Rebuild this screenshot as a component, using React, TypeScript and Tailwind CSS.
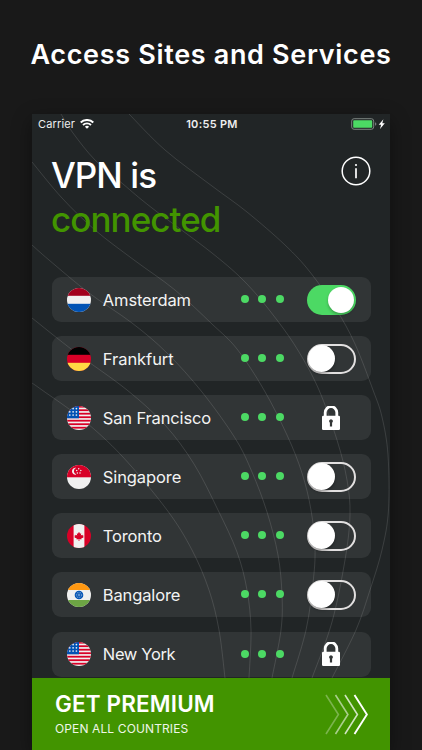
import type { ReactNode } from 'react';

type Point = [number, number];

interface Location {
  name: string;
  flag: keyof typeof flags;
  status: 'on' | 'off' | 'locked';
  tracking: string;
}

const stripes = [0, 1, 2, 3, 4, 5, 6];

const flags = {
  nl: (
    <>
      <rect width="24" height="24" fill="#f0f0f0" />
      <rect width="24" height="7.8" fill="#a2001d" />
      <rect y="15.8" width="24" height="8.2" fill="#0052b4" />
    </>
  ),
  de: (
    <>
      <rect width="24" height="24" fill="#d80027" />
      <rect width="24" height="7.8" fill="#000000" />
      <rect y="15.8" width="24" height="8.2" fill="#ffda44" />
    </>
  ),
  us: (
    <>
      <rect width="24" height="24" fill="#f0f0f0" />
      {stripes.map((i) => (
        <rect key={i} y={i * 3.5 - 0.2} width="24" height="1.8" fill="#d80027" />
      ))}
      <rect width="12" height="12.3" fill="#0052b4" />
      {[2.6, 5.8, 9].map((y) =>
        [2.8, 6.1, 9.4].map((x) => (
          <circle key={`${x}-${y}`} cx={x} cy={y} r="0.85" fill="#f0f0f0" />
        ))
      )}
    </>
  ),
  sg: (
    <>
      <rect width="24" height="24" fill="#f0f0f0" />
      <rect width="24" height="12.3" fill="#d80027" />
      <path d="M9.3 2.8A3.5 3.5 0 1 0 9.3 9.6A3.6 3.6 0 0 1 9.3 2.8Z" fill="#f0f0f0" />
      {[
        [11.7, 3.8],
        [9.7, 5.5],
        [13.8, 5.5],
        [10.4, 8],
        [13, 8],
      ].map(([x, y]) => (
        <circle key={`${x}-${y}`} cx={x} cy={y} r="0.75" fill="#f0f0f0" />
      ))}
    </>
  ),
  ca: (
    <>
      <rect width="24" height="24" fill="#d80027" />
      <rect x="6.6" width="10.8" height="24" fill="#f0f0f0" />
      <path
        d="M12 7.7l1.1 2.1 1.1-.5-.4 2.3 1.5-.9.4.8 1 .2-.5 1.1.3.6-2.3 1.2.2.8-2-.3v1.8h-.8v-1.8l-2 .3.2-.8-2.3-1.2.3-.6-.5-1.1 1-.2.4-.8 1.5.9-.4-2.3 1.1.5z"
        fill="#d80027"
      />
    </>
  ),
  in: (
    <>
      <rect width="24" height="24" fill="#f0f0f0" />
      <rect width="24" height="7" fill="#ff9811" />
      <rect y="17" width="24" height="7" fill="#6da544" />
      <circle cx="12" cy="12" r="4.3" fill="#0052b4" />
      <circle cx="12" cy="12" r="2.7" fill="none" stroke="#f0f0f0" strokeWidth="0.6" strokeDasharray="1 0.7" />
      <circle cx="12" cy="12" r="1.4" fill="#5c91d0" />
    </>
  ),
};

const locations: Location[] = [
  { name: 'Amsterdam', flag: 'nl', status: 'on', tracking: 'tracking-[-0.12px]' },
  { name: 'Frankfurt', flag: 'de', status: 'off', tracking: 'tracking-[-0.05px]' },
  { name: 'San Francisco', flag: 'us', status: 'locked', tracking: 'tracking-[-0.15px]' },
  { name: 'Singapore', flag: 'sg', status: 'off', tracking: 'tracking-[-0.1px]' },
  { name: 'Toronto', flag: 'ca', status: 'off', tracking: 'tracking-[-0.13px]' },
  { name: 'Bangalore', flag: 'in', status: 'off', tracking: 'tracking-[-0.13px]' },
  { name: 'New York', flag: 'us', status: 'locked', tracking: 'tracking-[-0.35px]' },
];

const contours: Point[][] = [
  [[129, 114], [165, 150], [212, 186], [247, 212], [285, 245], [310, 272], [336, 309], [355, 344], [373, 390], [382, 417], [388, 455], [388.5, 510], [382, 550], [370, 590], [356, 630], [332, 678]],
  [[61, 114], [73, 133], [95, 160], [123, 184], [152, 208], [212, 253], [247, 284], [277, 320], [299, 352], [319, 390], [337, 440], [347, 480], [350, 515], [345, 560], [332, 622], [312, 678]],
  [[32, 162], [62, 198], [95, 230], [134, 260], [175, 290], [212, 324], [237, 349], [264, 390], [287, 435], [302, 473], [311, 510], [315, 548], [313, 583], [306, 630], [292, 678]],
  [[32, 245], [49, 260], [89, 293], [132, 323], [167, 353], [202, 392], [235, 438], [252, 472], [267, 512], [278, 555], [282, 595], [281, 630], [272, 678]],
  [[32, 318], [75, 352], [127, 390], [165, 425], [194, 464], [218, 510], [237, 552], [247, 590], [251, 630], [249, 678]],
  [[32, 383], [42, 390], [82, 419], [122, 456], [167, 510], [192, 550], [209, 590], [219, 630], [225, 678]],
];

const toPath = (points: Point[]) =>
  points.slice(1).reduce((path, point, i) => {
    const current = points[i];
    const before = points[i - 1] ?? current;
    const after = points[i + 2] ?? point;
    const c1 = [current[0] + (point[0] - before[0]) / 6, current[1] + (point[1] - before[1]) / 6];
    const c2 = [point[0] - (after[0] - current[0]) / 6, point[1] - (after[1] - current[1]) / 6];
    return `${path} C${c1.join(' ')} ${c2.join(' ')} ${point.join(' ')}`;
  }, `M${points[0].join(' ')}`);

const Flag = ({ children }: { children: ReactNode }) => (
  <svg viewBox="0 0 24 24" className="size-6 shrink-0 rounded-full">
    {children}
  </svg>
);

const Toggle = ({ on }: { on: boolean }) =>
  on ? (
    <div className="flex h-[30px] w-[49px] items-center justify-end rounded-full bg-[#4cd964] pr-[1.5px]">
      <div className="size-[26px] rounded-full bg-white shadow-[0_2px_3px_rgba(0,0,0,0.25)]" />
    </div>
  ) : (
    <div className="flex h-[30px] w-[49px] items-center rounded-full border-2 border-[#e2e0e0]">
      <div className="-ml-px size-[27px] shrink-0 rounded-full bg-white shadow-[0_2px_3px_rgba(0,0,0,0.3)]" />
    </div>
  );

const Lock = () => (
  <svg viewBox="0 0 18 24" className="mr-4 h-6 w-[18px]" fill="none">
    <path d="M3.2 11V6.5a5.8 5.8 0 0 1 11.6 0V11" stroke="white" strokeWidth="2.8" />
    <rect y="9.8" width="18" height="14.2" rx="1.2" fill="white" />
    <path d="M9 13.2a2 2 0 0 1 1.1 3.6v3.6H7.9v-3.6A2 2 0 0 1 9 13.2z" fill="#323536" />
  </svg>
);

const LocationRow = ({ name, flag, status, tracking }: Location) => (
  <li className="flex h-[45px] items-center rounded-[9px] bg-white/[0.075] px-[15px]">
    <Flag>{flags[flag]}</Flag>
    <span className={`ml-3 flex-1 pt-[1.5px] text-[16.5px] whitespace-nowrap text-[#f3f3f3] ${tracking}`}>
      {name}
    </span>
    <div className="mr-[23px] flex gap-[9.2px] pb-px">
      <i className="size-2 rounded-full bg-[#4cd964]" />
      <i className="size-2 rounded-full bg-[#4cd964]" />
      <i className="size-2 rounded-full bg-[#4cd964]" />
    </div>
    <div className="flex w-[49px] justify-end">
      {status === 'locked' ? <Lock /> : <Toggle on={status === 'on'} />}
    </div>
  </li>
);

const StatusBar = () => (
  <div className="grid h-5 grid-cols-3 items-center pr-[4px] pl-[6px] text-[11px] leading-5 text-[#eeeeee]">
    <div className="flex items-center gap-[5px]">
      <span className="tracking-[0.15px]">Carrier</span>
      <svg viewBox="0 0 14 10" className="h-[10px] w-[14px]" fill="none" stroke="white" strokeWidth="1.9">
        <path d="M.7 3.5a9 9 0 0 1 12.6 0" />
        <path d="M3 6a5.8 5.8 0 0 1 8 0" />
        <path d="M7 9.8L4.9 7.7a3 3 0 0 1 4.2 0z" fill="white" stroke="none" />
      </svg>
    </div>
    <span className="text-center font-semibold tracking-[0.3px] whitespace-nowrap">10:55 PM</span>
    <div className="flex items-center justify-end">
      <svg viewBox="0 0 35 12" className="h-3 w-[35px]" fill="none">
        <rect x="0.7" y="0.7" width="22" height="10.6" rx="2.4" stroke="#7c8480" strokeWidth="1" />
        <rect x="2.2" y="2.2" width="19" height="7.6" rx="0.8" fill="#4cd964" />
        <path d="M24.2 4.2a2 2 0 0 1 0 3.6z" fill="#8b8f90" />
        <path d="M32.4 1.2l-4.7 5.6h2.4l-1.1 4.2 4.8-5.8h-2.5z" fill="white" />
      </svg>
    </div>
  </div>
);

const PremiumBanner = () => (
  <div className="relative flex h-[72px] justify-between bg-[#429400] pr-[22px] pl-[23px] text-white">
    <div className="pt-3">
      <p className="text-[22.5px] leading-7 font-semibold tracking-[0.15px] whitespace-nowrap">GET PREMIUM</p>
      <p className="mt-[3px] text-[12px] leading-4 tracking-[0.12px] whitespace-nowrap text-[#eef6e8]">
        OPEN ALL COUNTRIES
      </p>
    </div>
    <svg viewBox="0 0 43 41" className="mt-[15.5px] h-[41px] w-[43px]" fill="none" stroke="white" strokeWidth="1.6">
      <path d="M1 1l12.4 19.5L1 40" opacity="0.3" />
      <path d="M10.5 1l12.4 19.5L10.5 40" opacity="0.55" />
      <path d="M20 1l12.4 19.5L20 40" opacity="0.75" />
      <path d="M29.5 1l12.4 19.5L29.5 40" strokeWidth="1.9" />
    </svg>
  </div>
);

export default function App() {
  return (
    <main className="flex h-[750px] w-[422px] flex-col items-center overflow-hidden bg-[#191919] font-['Inter','Liberation_Sans',sans-serif]">
      <h1 className="flex h-[114px] shrink-0 items-center pb-[4px] text-[27px] font-semibold tracking-[0.67px] whitespace-nowrap text-white">
        Access Sites and Services
      </h1>
      <section className="relative flex h-[636px] w-[358px] shrink-0 flex-col bg-[#212526] shadow-[0_6px_18px_rgba(0,0,0,0.4)]">
        <svg
          viewBox="32 114 358 636"
          className="pointer-events-none absolute inset-0 size-full"
          fill="none"
          stroke="white"
          strokeOpacity="0.12"
        >
          {contours.map((points, i) => (
            <path key={i} d={toPath(points)} />
          ))}
        </svg>
        <StatusBar />
        <header className="relative flex h-[143px] items-start justify-between pt-[19px] pr-[19px] pl-[19px]">
          <h2 className="text-[35px] leading-[44px] font-[450] whitespace-nowrap text-white">
            <span className="block tracking-[-0.95px]">VPN is</span>
            <span className="block tracking-[-0.95px] text-[#429400]">connected</span>
          </h2>
          <svg viewBox="0 0 30 30" className="mt-[3px] size-[30px]" fill="none" stroke="white">
            <circle cx="15" cy="15" r="13.8" strokeWidth="1.5" />
            <path d="M15 12.2v10" strokeWidth="1.7" />
            <circle cx="15" cy="9" r="1.1" fill="white" stroke="none" />
          </svg>
        </header>
        <ul className="relative flex h-[401px] flex-col gap-[14.1px] overflow-hidden pr-[19.4px] pl-[19.8px]">
          {locations.map((location) => (
            <LocationRow key={location.name} {...location} />
          ))}
        </ul>
        <PremiumBanner />
      </section>
    </main>
  );
}
